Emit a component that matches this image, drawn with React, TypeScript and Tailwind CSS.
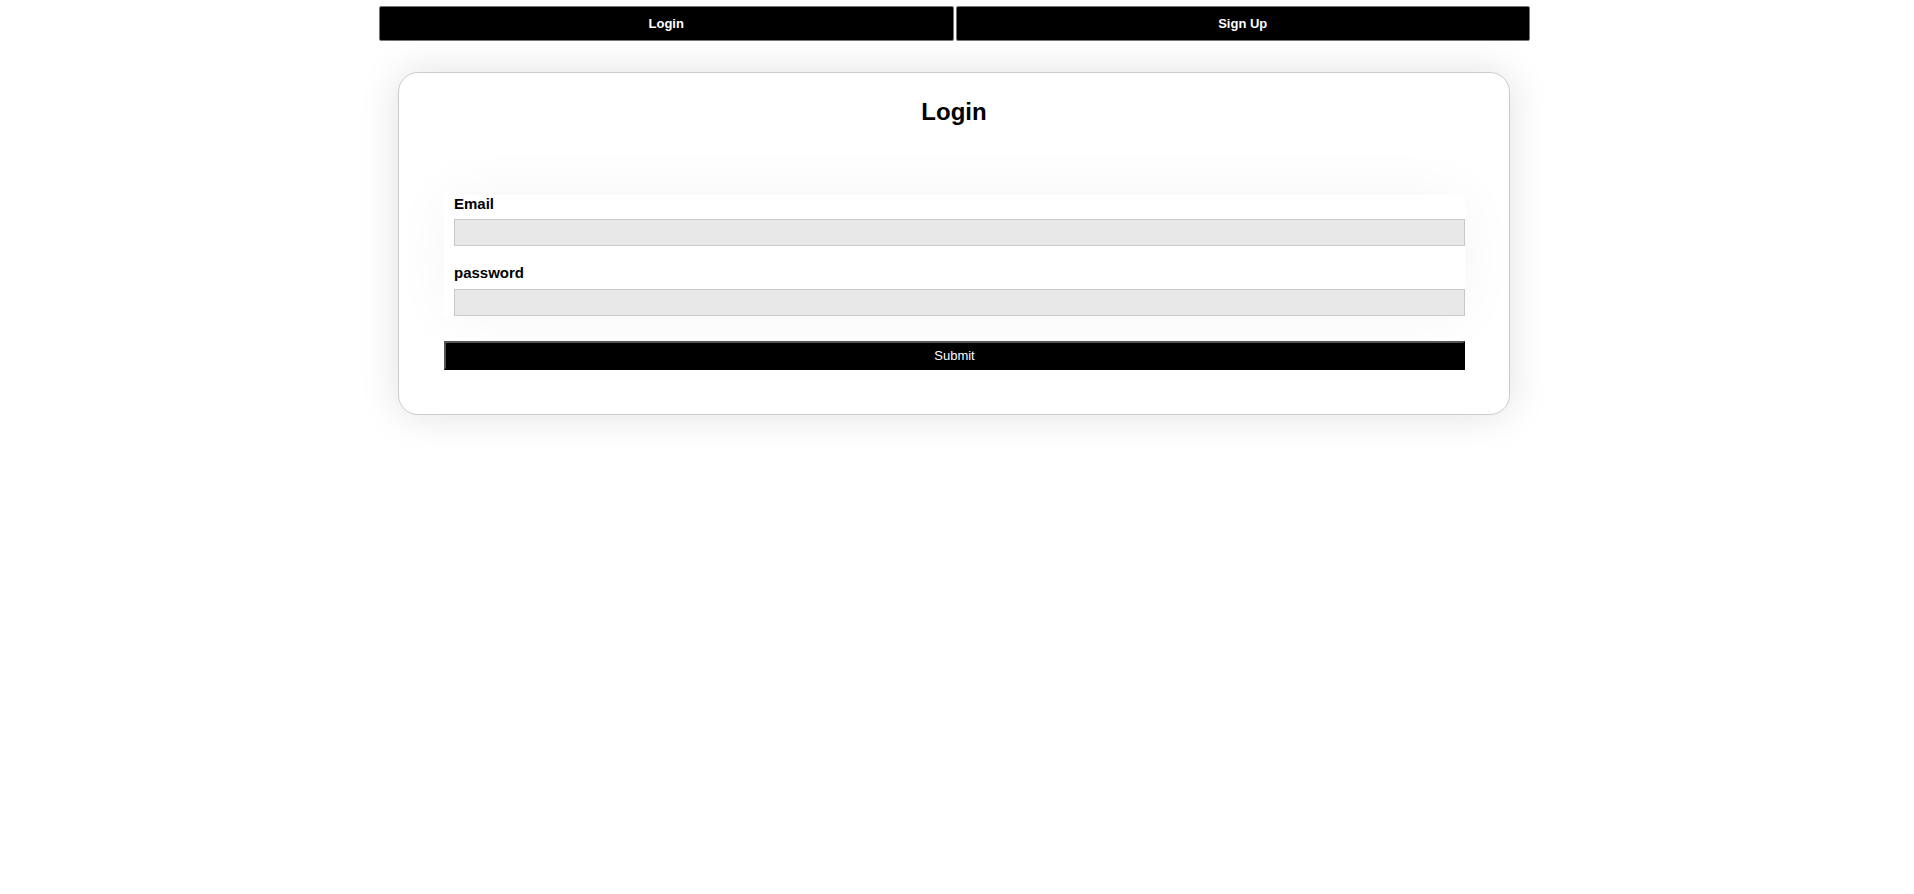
import React from "react";

export default function App() {
  return (
    <div className="min-h-screen w-full bg-white" style={{ fontFamily: '"Liberation Sans", Arial, sans-serif' }}>
      <div className="ml-[379px] mt-[6px] flex w-[1151px] gap-[2px]">
        <button className="h-[35px] flex-1 rounded-[2px] border border-[#767676] bg-black text-[13px] font-semibold text-white">
          Login
        </button>
        <button className="h-[35px] flex-1 rounded-[2px] border border-[#767676] bg-black text-[13px] font-semibold text-white">
          Sign Up
        </button>
      </div>

      <div className="ml-[398px] mt-[31px] h-[343px] w-[1112px] rounded-[20px] border border-[#cccccc] bg-white shadow-[0_0_40px_rgba(0,0,0,0.12)]">
        <h1 className="pt-[25px] text-center text-[24px] font-bold leading-[28px] text-black">Login</h1>
        <div className="ml-[45px] mt-[69px] w-[1021px]">
          <div className="pl-[10px] shadow-[0_0_60px_rgba(0,0,0,0.045)]">
            <label className="block text-[15px] font-semibold leading-[18px] text-black">Email</label>
            <input
              type="email"
              className="mt-[6px] block h-[27px] w-[1011px] border border-[#c8c8c8] bg-[#e8e8e8] outline-none"
            />
            <label className="mt-[18px] block text-[15px] font-semibold leading-[18px] text-black">password</label>
            <input
              type="password"
              className="mt-[7px] block h-[27px] w-[1011px] border border-[#c8c8c8] bg-[#e8e8e8] outline-none"
            />
          </div>
          <button className="mt-[25px] block h-[29px] w-[1021px] border-2 border-t-[#555555] border-l-[#555555] border-r-black border-b-black bg-black text-[13px] text-white">
            Submit
          </button>
        </div>
      </div>
    </div>
  );
}
